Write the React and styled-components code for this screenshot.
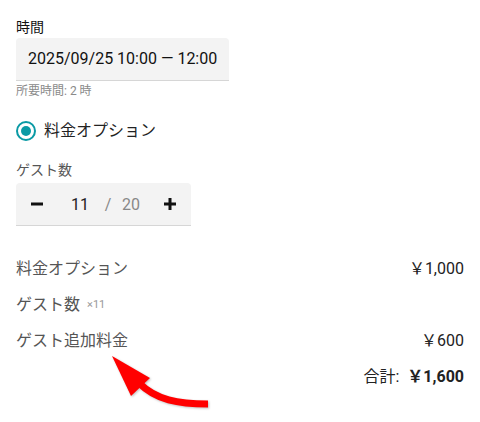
import React from 'react'
import styled, { createGlobalStyle } from 'styled-components'

const GlobalStyle = createGlobalStyle`
  html, body {
    margin: 0;
    padding: 0;
    background: #fff;
  }
  body {
    font-family: Roboto, "Noto Sans CJK JP", sans-serif;
    color: #111;
  }
`

const Page = styled.div`
  position: relative;
  width: 480px;
  height: 422px;
  box-sizing: border-box;
  padding: 17px 16px 0;
`

const Label = styled.div`
  font-size: 14px;
  line-height: 20px;
  color: ${p => p.$muted ? '#555' : '#111'};
  margin-bottom: ${p => p.$gap || 0}px;
`

const Field = styled.div`
  display: inline-block;
  background: #f3f3f3;
  border-radius: 4px 4px 0 0;
  border-bottom: 1px solid #d6d6d6;
  padding: 10px 12px;
  font-size: 16px;
  line-height: 22px;
  color: #111;
`

const Hint = styled.div`
  font-size: 12px;
  line-height: 16px;
  color: #8a8a8a;
  margin-top: 2px;
`

const RadioRow = styled.label`
  display: flex;
  align-items: center;
  gap: 8px;
  margin-top: 20px;
  font-size: 16px;
  line-height: 24px;
  color: #222;
`

const RadioDot = styled.span`
  width: 20px;
  height: 20px;
  box-sizing: border-box;
  border-radius: 50%;
  border: 2px solid #0a9aa5;
  display: flex;
  align-items: center;
  justify-content: center;
  &::after {
    content: '';
    width: 10px;
    height: 10px;
    border-radius: 50%;
    background: #0a9aa5;
  }
`

const Section = styled.div`
  margin-top: ${p => p.$top || 0}px;
`

const Stepper = styled.div`
  display: inline-flex;
  align-items: center;
  width: 175px;
  height: 43px;
  box-sizing: border-box;
  background: #f3f3f3;
  border-radius: 4px 4px 0 0;
  border-bottom: 1px solid #d6d6d6;
`

const StepButton = styled.button`
  border: none;
  background: none;
  padding: 0;
  width: ${p => p.$w}px;
  height: 100%;
  display: flex;
  align-items: center;
  justify-content: center;
  color: #111;
  cursor: pointer;
`

const Count = styled.span`
  font-size: 16px;
  color: ${p => p.$dim ? '#888' : '#222'};
  width: ${p => p.$w}px;
  text-align: center;
`

const Summary = styled.div`
  margin-top: 25px;
`

const Row = styled.div`
  display: flex;
  justify-content: space-between;
  align-items: center;
  padding: 6px 0;
  font-size: 16px;
  line-height: 24px;
`

const RowLabel = styled.span`
  color: #555;
  display: flex;
  align-items: center;
  gap: 7px;
`

const Multiplier = styled.small`
  font-size: 11px;
  color: #999;
`

const Amount = styled.span`
  color: #222;
  font-weight: ${p => p.$bold ? 700 : 400};
`

const Total = styled.div`
  display: flex;
  justify-content: flex-end;
  align-items: center;
  gap: 8px;
  padding: 6px 0;
  font-size: 16px;
  line-height: 24px;
  color: #222;
`

const Pointer = styled.svg`
  position: absolute;
  left: 100px;
  top: 345px;
  filter: drop-shadow(1px 1px 1px rgba(0, 0, 0, 0.25));
`

function Minus() {
  return (
    <svg width="12" height="12" viewBox="0 0 12 12">
      <rect x="0" y="4.5" width="12" height="3" fill="#111" />
    </svg>
  )
}

function Plus() {
  return (
    <svg width="12" height="12" viewBox="0 0 12 12">
      <rect x="0" y="4.5" width="12" height="3" fill="#111" />
      <rect x="4.5" y="0" width="3" height="12" fill="#111" />
    </svg>
  )
}

export default function App() {
  return (
    <>
      <GlobalStyle />
      <Page>
        <Label $gap={1}>時間</Label>
        <Field>2025/09/25 10:00 — 12:00</Field>
        <Hint>所要時間: 2 時</Hint>

        <RadioRow>
          <RadioDot />
          料金オプション
        </RadioRow>

        <Section $top={17}>
          <Label $muted $gap={3}>ゲスト数</Label>
          <Stepper>
            <StepButton $w={42}><Minus /></StepButton>
            <Count $w={44}>11</Count>
            <Count $dim $w={12}>/</Count>
            <Count $dim $w={34}>20</Count>
            <StepButton $w={43}><Plus /></StepButton>
          </Stepper>
        </Section>

        <Summary>
          <Row>
            <RowLabel>料金オプション</RowLabel>
            <Amount>￥1,000</Amount>
          </Row>
          <Row>
            <RowLabel>ゲスト数<Multiplier>×11</Multiplier></RowLabel>
          </Row>
          <Row>
            <RowLabel>ゲスト追加料金</RowLabel>
            <Amount>￥600</Amount>
          </Row>
          <Total>
            <span>合計:</span>
            <Amount $bold>￥1,600</Amount>
          </Total>
        </Summary>

        <Pointer width="120" height="70" viewBox="100 345 120 70">
          <path d="M208 404 C178 404 156 400 139 383" fill="none" stroke="#ff0000" strokeWidth="7" />
          <polygon points="112,356 131,396 150,378" fill="#ff0000" />
        </Pointer>
      </Page>
    </>
  )
}
